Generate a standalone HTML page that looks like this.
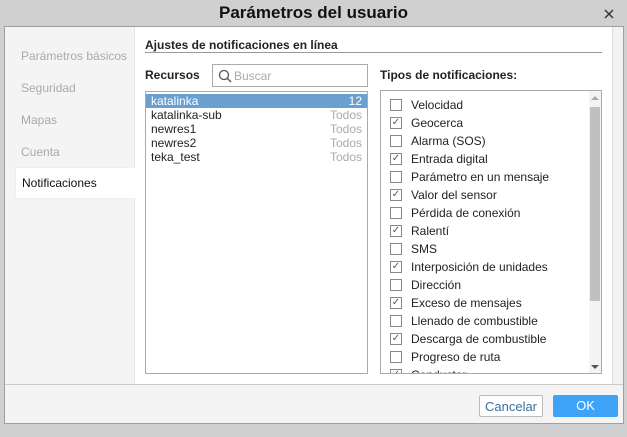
<!DOCTYPE html>
<html><head><meta charset="utf-8"><style>
*{box-sizing:border-box;margin:0;padding:0}
body{width:627px;height:437px;background:#d0d0d0;font-family:"Liberation Sans",sans-serif;position:relative;overflow:hidden;font-size:12px;color:#222}
.a{position:absolute}
.title{left:0;top:0;width:627px;height:26px;text-align:center;font-size:17px;font-weight:bold;line-height:25px;color:#111}
.dlg{left:4px;top:26px;width:620px;height:398px;border:1px solid #a0a0a0;background:#fff}
.side{left:5px;top:27px;width:130px;height:357px;background:#f4f4f4;border-right:1px solid #e4e4e4}
.nav{left:21px;color:#aaa;font-size:12px}
.notif{left:15px;top:167px;width:120px;height:32px;background:#fff;border:1px solid #eee;border-right:none;padding-left:6px;line-height:31px;color:#111}
.strip{left:612px;top:27px;width:11px;height:357px;background:#f2f2f2;border-left:1px solid #ddd}
.foot{left:5px;top:384px;width:618px;height:39px;background:#f4f4f4;border-top:1px solid #ccc}
.btn{top:395px;height:22px;border-radius:2px;text-align:center;line-height:21px;font-size:13px}
.row{position:absolute;left:0;width:100%;height:14px;line-height:14px;padding:0 5px}
.row span{float:right;color:#aaa}
.cb{position:absolute;left:9px;width:12px;height:12px;border:1px solid #888;background:#fff;font-size:10px;line-height:10px;text-align:center;color:#555}
.lb{position:absolute;left:30px;font-size:12px}
</style></head><body>
<div class="a title">Parámetros del usuario</div>
<svg class="a" style="left:604px;top:9px" width="10" height="10"><path d="M1 1L9 9M9 1L1 9" stroke="#333" stroke-width="1.4"/></svg>
<div class="a dlg"></div>
<div class="a side"></div>
<div class="a nav" style="top:49px">Parámetros básicos</div>
<div class="a nav" style="top:81px">Seguridad</div>
<div class="a nav" style="top:113px">Mapas</div>
<div class="a nav" style="top:145px">Cuenta</div>
<div class="a notif">Notificaciones</div>
<div class="a strip"></div>
<div class="a" style="left:145px;top:38px;font-weight:bold;font-size:12px">Ajustes de notificaciones en línea</div>
<div class="a" style="left:145px;top:52px;width:457px;height:1px;background:#999"></div>
<div class="a" style="left:145px;top:68px;font-weight:bold">Recursos</div>
<div class="a" style="left:212px;top:64px;width:156px;height:23px;border:1px solid #aaa;background:#fff"><svg width="14" height="14" style="position:absolute;left:5px;top:4px"><circle cx="6" cy="6" r="4.5" fill="none" stroke="#555" stroke-width="1.3"/><line x1="9.2" y1="9.2" x2="13" y2="13" stroke="#555" stroke-width="1.4"/></svg><span style="position:absolute;left:21px;top:4px;color:#aaa;font-size:12px">Buscar</span></div>
<div class="a" style="left:145px;top:91px;width:223px;height:283px;border:1px solid #aaa;background:#fff;font-size:12px">
<div class="row" style="top:2px;background:#6b9fd0;color:#fff">katalinka<span style="color:#fff">12</span></div>
<div class="row" style="top:16px">katalinka-sub<span>Todos</span></div>
<div class="row" style="top:30px">newres1<span>Todos</span></div>
<div class="row" style="top:44px">newres2<span>Todos</span></div>
<div class="row" style="top:58px">teka_test<span>Todos</span></div>
</div>
<div class="a" style="left:380px;top:68px;font-weight:bold">Tipos de notificaciones:</div>
<div class="a" style="left:380px;top:90px;width:222px;height:284px;border:1px solid #aaa;background:#fff;overflow:hidden">
<div id="l"></div>
<div style="position:absolute;right:0;top:0;width:12px;height:100%;background:#f4f4f4"></div>
<div style="position:absolute;right:1px;top:16px;width:10px;height:194px;background:#c0c0c0"></div>
<div style="position:absolute;right:2px;top:5px;width:0;height:0;border:4px solid transparent;border-bottom-color:#aaa;border-top:none"></div>
<div style="position:absolute;right:2px;bottom:4px;width:0;height:0;border:4px solid transparent;border-top-color:#555;border-bottom:none"></div>
<script>
var it=[["Velocidad",0],["Geocerca",1],["Alarma (SOS)",0],["Entrada digital",1],["Parámetro en un mensaje",0],["Valor del sensor",1],["Pérdida de conexión",0],["Ralentí",1],["SMS",0],["Interposición de unidades",1],["Dirección",0],["Exceso de mensajes",1],["Llenado de combustible",0],["Descarga de combustible",1],["Progreso de ruta",0],["Conductor",1]];
var h="";it.forEach(function(e,i){var y=8+i*18;h+='<div class="cb" style="top:'+y+'px">'+(e[1]?'✓':'')+'</div><div class="lb" style="top:'+(y-1)+'px">'+e[0]+'</div>';});
document.getElementById("l").innerHTML=h;
</script>
</div>
<div class="a foot"></div>
<div class="a btn" style="left:479px;width:64px;border:1px solid #bbb;background:#fff;color:#3a6fa0">Cancelar</div>
<div class="a btn" style="left:553px;width:65px;background:#3ea2f7;color:#fff">OK</div>
</body></html>
